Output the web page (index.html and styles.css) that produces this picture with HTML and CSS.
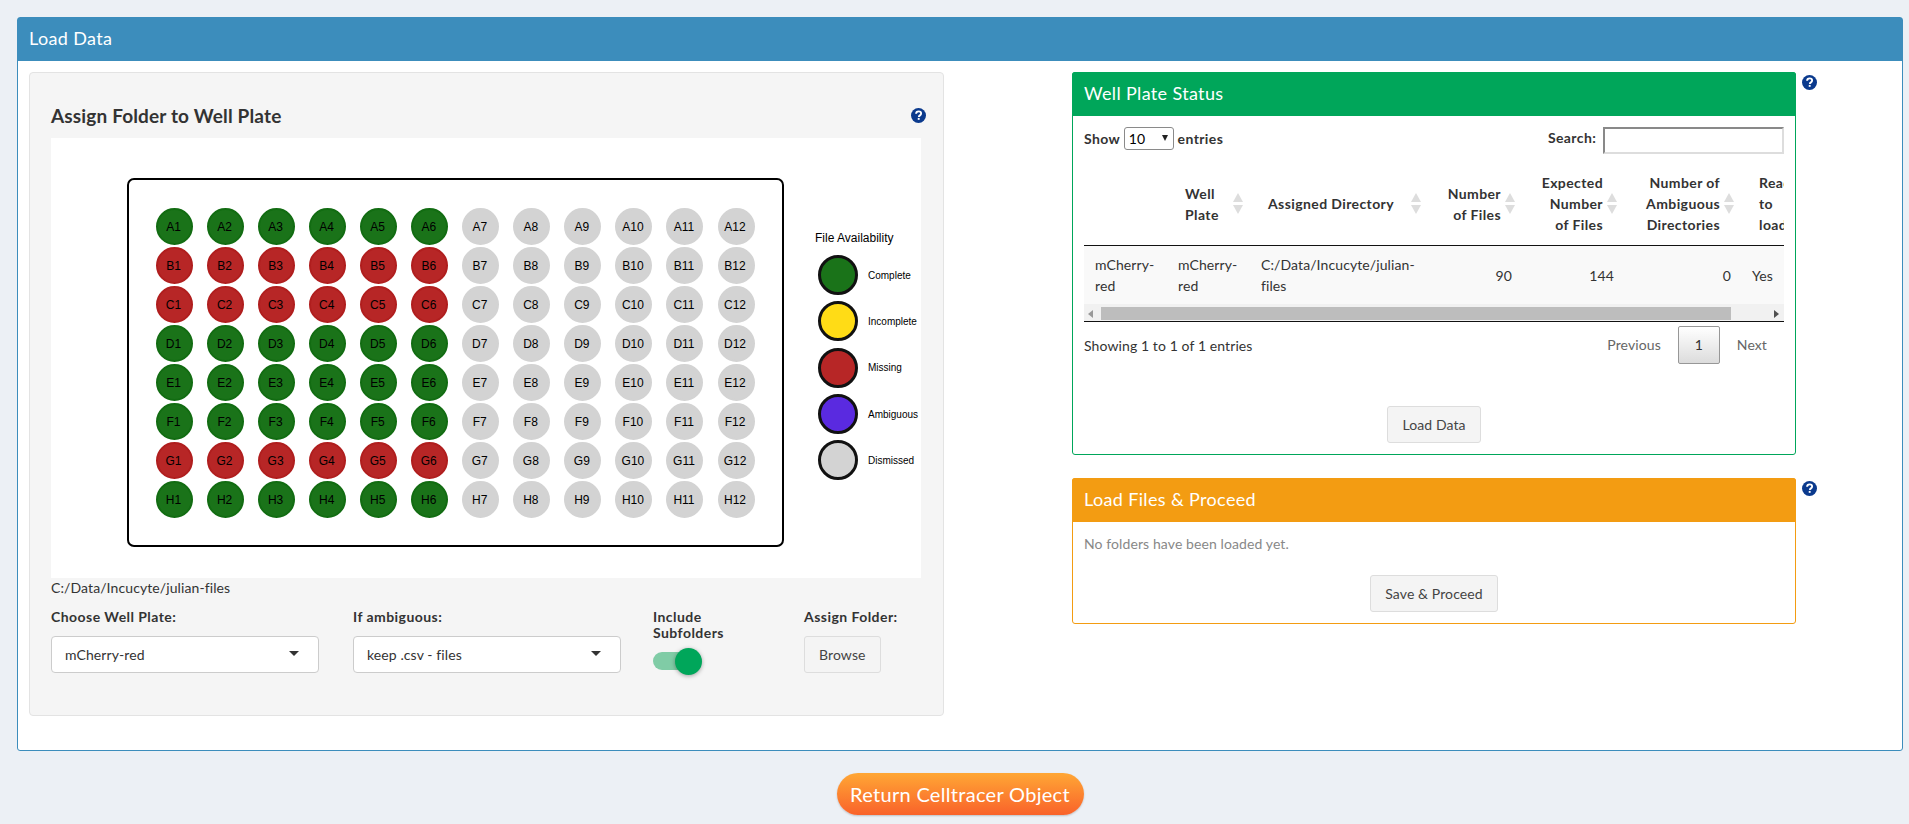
FILE: index.html
```html
<!DOCTYPE html>
<html>
<head>
<meta charset="utf-8">
<title>Load Data</title>
<link rel="stylesheet" href="styles.css">
</head>
<body>
<div class="box box-primary">
  <div class="box-header">Load Data</div>
  <div class="box-body">

    <div class="well">
      <div class="well-title">
        <h4>Assign Folder to Well Plate</h4>
        <svg class="help help-left" viewBox="0 0 16 16"><circle cx="8" cy="8" r="8"/><path d="M5.4 6.2c0-1.6 1.2-2.6 2.8-2.6 1.5 0 2.6 1 2.6 2.3 0 2-2.4 1.9-2.4 3.6" /><rect x="7.2" y="10.6" width="2" height="2"/></svg>
      </div>
      <div class="plot">
        <div class="plate">
          <span class="dot ok">A1</span><span class="dot ok">A2</span><span class="dot ok">A3</span><span class="dot ok">A4</span><span class="dot ok">A5</span><span class="dot ok">A6</span><span class="dot off">A7</span><span class="dot off">A8</span><span class="dot off">A9</span><span class="dot off">A10</span><span class="dot off">A11</span><span class="dot off">A12</span>
          <span class="dot miss">B1</span><span class="dot miss">B2</span><span class="dot miss">B3</span><span class="dot miss">B4</span><span class="dot miss">B5</span><span class="dot miss">B6</span><span class="dot off">B7</span><span class="dot off">B8</span><span class="dot off">B9</span><span class="dot off">B10</span><span class="dot off">B11</span><span class="dot off">B12</span>
          <span class="dot miss">C1</span><span class="dot miss">C2</span><span class="dot miss">C3</span><span class="dot miss">C4</span><span class="dot miss">C5</span><span class="dot miss">C6</span><span class="dot off">C7</span><span class="dot off">C8</span><span class="dot off">C9</span><span class="dot off">C10</span><span class="dot off">C11</span><span class="dot off">C12</span>
          <span class="dot ok">D1</span><span class="dot ok">D2</span><span class="dot ok">D3</span><span class="dot ok">D4</span><span class="dot ok">D5</span><span class="dot ok">D6</span><span class="dot off">D7</span><span class="dot off">D8</span><span class="dot off">D9</span><span class="dot off">D10</span><span class="dot off">D11</span><span class="dot off">D12</span>
          <span class="dot ok">E1</span><span class="dot ok">E2</span><span class="dot ok">E3</span><span class="dot ok">E4</span><span class="dot ok">E5</span><span class="dot ok">E6</span><span class="dot off">E7</span><span class="dot off">E8</span><span class="dot off">E9</span><span class="dot off">E10</span><span class="dot off">E11</span><span class="dot off">E12</span>
          <span class="dot ok">F1</span><span class="dot ok">F2</span><span class="dot ok">F3</span><span class="dot ok">F4</span><span class="dot ok">F5</span><span class="dot ok">F6</span><span class="dot off">F7</span><span class="dot off">F8</span><span class="dot off">F9</span><span class="dot off">F10</span><span class="dot off">F11</span><span class="dot off">F12</span>
          <span class="dot miss">G1</span><span class="dot miss">G2</span><span class="dot miss">G3</span><span class="dot miss">G4</span><span class="dot miss">G5</span><span class="dot miss">G6</span><span class="dot off">G7</span><span class="dot off">G8</span><span class="dot off">G9</span><span class="dot off">G10</span><span class="dot off">G11</span><span class="dot off">G12</span>
          <span class="dot ok">H1</span><span class="dot ok">H2</span><span class="dot ok">H3</span><span class="dot ok">H4</span><span class="dot ok">H5</span><span class="dot ok">H6</span><span class="dot off">H7</span><span class="dot off">H8</span><span class="dot off">H9</span><span class="dot off">H10</span><span class="dot off">H11</span><span class="dot off">H12</span>
        </div>
        <div class="legend">
          <div class="legend-title">File Availability</div>
          <div class="legend-item"><i class="key ok"></i>Complete</div>
          <div class="legend-item"><i class="key part"></i>Incomplete</div>
          <div class="legend-item"><i class="key miss"></i>Missing</div>
          <div class="legend-item"><i class="key amb"></i>Ambiguous</div>
          <div class="legend-item"><i class="key off"></i>Dismissed</div>
        </div>
      </div>
      <div class="path">C:/Data/Incucyte/julian-files</div>
      <div class="controls">
        <div>
          <label>Choose Well Plate:</label>
          <div class="selectize">mCherry-red</div>
        </div>
        <div>
          <label>If ambiguous:</label>
          <div class="selectize">keep .csv - files</div>
        </div>
        <div>
          <label>Include<br>Subfolders</label>
          <div class="switch"><span class="knob"></span></div>
        </div>
        <div>
          <label>Assign Folder:</label>
          <button class="btn">Browse</button>
        </div>
      </div>
    </div>

    <div class="side">
      <div class="side-row">
        <div class="card card-green">
          <div class="card-header">Well Plate Status</div>
          <div class="card-body">
            <div class="dt-top">
              <div class="dt-length">Show <span class="dt-select"><select><option>10</option><option>25</option></select></span> entries</div>
              <div class="dt-filter">Search: <input type="text"></div>
            </div>
            <div class="dt-scroll">
              <table>
                <colgroup>
                  <col class="c1"><col class="c2"><col class="c3"><col class="c4"><col class="c5"><col class="c6"><col class="c7">
                </colgroup>
                <thead>
                  <tr>
                    <th class="plain"></th>
                    <th>Well<br>Plate</th>
                    <th>Assigned Directory</th>
                    <th class="num">Number<br>of Files</th>
                    <th class="num">Expected<br>Number<br>of Files</th>
                    <th class="num">Number of<br>Ambiguous<br>Directories</th>
                    <th>Ready<br>to<br>load</th>
                  </tr>
                </thead>
                <tbody>
                  <tr>
                    <td>mCherry-<br>red</td>
                    <td>mCherry-<br>red</td>
                    <td>C:/Data/Incucyte/julian-<br>files</td>
                    <td class="num">90</td>
                    <td class="num">144</td>
                    <td class="num">0</td>
                    <td>Yes</td>
                  </tr>
                </tbody>
              </table>
              <div class="dt-bar">
                <span class="arrow-left"></span>
                <span class="thumb"></span>
                <span class="arrow-right"></span>
              </div>
            </div>
            <div class="dt-bottom">
              <div>Showing 1 to 1 of 1 entries</div>
              <div class="paging">
                <a>Previous</a>
                <a class="current">1</a>
                <a>Next</a>
              </div>
            </div>
            <div class="card-action load-action"><button class="btn">Load Data</button></div>
          </div>
        </div>
        <svg class="help" viewBox="0 0 16 16"><circle cx="8" cy="8" r="8"/><path d="M5.4 6.2c0-1.6 1.2-2.6 2.8-2.6 1.5 0 2.6 1 2.6 2.3 0 2-2.4 1.9-2.4 3.6" /><rect x="7.2" y="10.6" width="2" height="2"/></svg>
      </div>

      <div class="side-row">
        <div class="card card-orange">
          <div class="card-header">Load Files &amp; Proceed</div>
          <div class="card-body">
            <div class="muted">No folders have been loaded yet.</div>
            <div class="card-action save-action"><button class="btn">Save &amp; Proceed</button></div>
          </div>
        </div>
        <svg class="help" viewBox="0 0 16 16"><circle cx="8" cy="8" r="8"/><path d="M5.4 6.2c0-1.6 1.2-2.6 2.8-2.6 1.5 0 2.6 1 2.6 2.3 0 2-2.4 1.9-2.4 3.6" /><rect x="7.2" y="10.6" width="2" height="2"/></svg>
      </div>
    </div>

  </div>
</div>
<div class="return-row"><button class="btn-return">Return Celltracer Object</button></div>
</body>
</html>
```

FILE: styles.css
```css
* { box-sizing: border-box; }
html, body { height: 100%; }
body {
  margin: 0;
  padding: 17px 6px 0 17px;
  background-color: #ecf0f5;
  font-family: Lato, "Noto Sans", sans-serif;
  font-size: 14px;
  line-height: 21px;
  letter-spacing: .1px;
  color: #333;
  overflow: hidden;
}

/* main box */
.box-primary {
  height: 734px;
  background: #fff;
  border: 1px solid #3c8dbc;
  border-radius: 3px;
}
.box-header {
  height: 43px;
  padding-left: 11px;
  background: #3c8dbc;
  color: #fff;
  font-size: 18px;
  line-height: 41px;
  letter-spacing: .35px;
}
.box-body {
  display: grid;
  grid-template-columns: 915px 1fr;
  column-gap: 128px;
  padding: 11px 0 0 11px;
}

/* left panel */
.well {
  height: 644px;
  padding: 30px 22px 0 21px;
  background: #f5f5f5;
  border: 1px solid #e3e3e3;
  border-radius: 4px;
}
.well-title {
  display: flex;
  justify-content: space-between;
  align-items: center;
  height: 24px;
  margin-bottom: 11px;
}
.well-title h4 {
  margin: 0;
  font-size: 19px;
  font-weight: bold;
  letter-spacing: .15px;
}
.help {
  flex: none;
  width: 15px;
  height: 15px;
  margin: 3px 0 0 6px;
}
.help circle { fill: #0b3a8d; }
.help path { fill: none; stroke: #fff; stroke-width: 2; }
.help rect { fill: #fff; }
.help-left { margin: 0 -5px 0 0; }

/* plate plot */
.plot {
  display: flex;
  height: 440px;
  padding: 40px 0 0 76px;
  background: #fff;
  overflow: hidden;
  font-family: "Liberation Sans", Arial, sans-serif;
  letter-spacing: 0;
  color: #000;
}
.plate {
  flex: none;
  display: grid;
  grid-template-columns: repeat(12, 37px);
  grid-auto-rows: 37px;
  column-gap: 14.05px;
  row-gap: 2px;
  align-content: start;
  width: 657px;
  height: 369px;
  padding: 28px 0 0 27px;
  border: 2px solid #000;
  border-radius: 7px;
}
.dot {
  display: flex;
  align-items: center;
  justify-content: center;
  border-radius: 50%;
  border: 2px solid;
  font-size: 12px;
  line-height: 1;
  padding: 1px 2px 0 0;
}
.dot.ok { background: #1a7319; border-color: #126c12; }
.dot.miss { background: #b72626; border-color: #b01e1e; }
.dot.off { background: #d3d3d3; border-color: #d3d3d3; }

.legend {
  flex: none;
  padding: 52px 0 0 31px;
}
.legend-title {
  font-size: 12px;
  line-height: 16px;
  margin-bottom: 6px;
  white-space: nowrap;
}
.legend-item {
  display: flex;
  align-items: center;
  height: 46.3px;
  padding-left: 3px;
  font-size: 10px;
  white-space: nowrap;
}
.key {
  width: 40px;
  height: 40px;
  margin-right: 10px;
  border: 3px solid #111;
  border-radius: 50%;
}
.key.ok { background: #1a7319; }
.key.part { background: #ffdc16; }
.key.miss { background: #b72626; }
.key.amb { background: #5a2ae0; }
.key.off { background: #d3d3d3; }

.path {
  height: 21px;
  margin-top: -1px;
}

/* inputs under the plot */
.controls {
  display: grid;
  grid-template-columns: 302px 300px 151px 1fr;
  margin-top: 11px;
}
.controls label {
  display: block;
  min-height: 27px;
  font-weight: bold;
  line-height: 16px;
  letter-spacing: .45px;
}
.selectize {
  position: relative;
  width: 268px;
  height: 37px;
  padding: 0 13px;
  background: #fff;
  border: 1px solid #ccc;
  border-radius: 4px;
  line-height: 35px;
}
.selectize::after {
  content: "";
  position: absolute;
  right: 19px;
  top: 14px;
  border: 5px solid transparent;
  border-top-color: #333;
  border-bottom-width: 0;
}
.switch {
  position: relative;
  width: 40px;
  height: 18px;
  margin-top: 11px;
  background: #80cca6;
  border-radius: 9px;
}
.knob {
  position: absolute;
  right: -9px;
  top: -4px;
  width: 27px;
  height: 27px;
  background: #00a65a;
  border-radius: 50%;
  box-shadow: 0 1px 4px rgba(0, 0, 0, .35);
}
.btn {
  padding: 7px 14px;
  background: #f4f4f4;
  border: 1px solid #ddd;
  border-radius: 3px;
  color: #444;
  font: inherit;
  letter-spacing: inherit;
}

/* right side */
.side-row {
  display: flex;
  align-items: flex-start;
  margin-bottom: 23px;
}
.card {
  width: 724px;
  background: #fff;
  border: 1px solid;
  border-radius: 3px;
}
.card-green { border-color: #00a65a; }
.card-orange { border-color: #f39c12; }
.card-header {
  height: 44px;
  margin: -1px -1px 0;
  padding-left: 12px;
  color: #fff;
  font-size: 18px;
  line-height: 42px;
  letter-spacing: .35px;
  border-radius: 3px 3px 0 0;
}
.card-green .card-header { background: #00a65a; }
.card-orange .card-header { background: #f39c12; }
.card-body { padding: 11px; }
.card-action { text-align: center; }
.load-action { margin-top: 42px; }
.save-action { margin-top: 21px; }
.muted { color: #888; }

/* status table */
.dt-top {
  display: flex;
  justify-content: space-between;
  align-items: flex-start;
  height: 27px;
  font-weight: bold;
  letter-spacing: .4px;
}
.dt-select {
  position: relative;
  display: inline-block;
}
.dt-select::after {
  content: "";
  position: absolute;
  right: 6px;
  top: 8px;
  border: 3.5px solid transparent;
  border-top: 6px solid #222;
  border-bottom-width: 0;
}
.dt-length select {
  appearance: none;
  width: 50px;
  height: 23px;
  font: 14px Lato, sans-serif;
  padding: 0 4px;
  background: #fff;
  border: 1px solid #8a8a8a;
  border-radius: 3px;
}
.dt-filter input {
  width: 181px;
  height: 27px;
  margin-left: 3px;
  border: 2px inset #ddd;
  vertical-align: top;
}
.dt-scroll {
  margin-top: 8px;
  width: 700px;
  overflow: hidden;
  border-bottom: 1px solid #111;
}
table {
  table-layout: fixed;
  width: 737px;
  border-collapse: collapse;
}
.c1, .c2 { width: 83px; }
.c3 { width: 178px; }
.c4 { width: 94px; }
.c5 { width: 102px; }
.c6 { width: 117px; }
.c7 { width: 80px; }
th {
  position: relative;
  padding: 10px 21px 10px 18px;
  border-bottom: 1px solid #111;
  font-weight: bold;
  letter-spacing: .4px;
  text-align: left;
  vertical-align: middle;
}
th::before, th::after {
  content: "";
  position: absolute;
  right: 7px;
  border: 5px solid transparent;
}
th::before {
  top: calc(50% - 11px);
  border-top-width: 0;
  border-bottom: 9px solid #ddd;
}
th::after {
  top: calc(50% + 1px);
  border-bottom-width: 0;
  border-top: 9px solid #ddd;
}
th.plain::before, th.plain::after { display: none; }
th.num { text-align: right; }
td {
  height: 58px;
  padding: 8px 10px 8px 11px;
  background: #f9f9f9;
  vertical-align: middle;
}
td.num { text-align: right; }
.dt-bar {
  display: flex;
  align-items: center;
  height: 17px;
  padding-top: 2px;
  background: #f1f1f1;
}
.thumb {
  width: 630px;
  height: 13px;
  margin-left: 3px;
  background: #bdbdbd;
}
.arrow-left, .arrow-right {
  border: 4px solid transparent;
}
.arrow-left {
  margin-left: 4px;
  border-left-width: 0;
  border-right: 5px solid #999;
  margin-right: 5px;
}
.arrow-right {
  margin-left: 43px;
  border-right-width: 0;
  border-left: 5px solid #505050;
}
.dt-bottom {
  display: flex;
  justify-content: space-between;
  align-items: center;
  margin-top: 4px;
}
.paging {
  display: flex;
  align-items: center;
  color: #666;
}
.paging a { padding: 8px 17px; line-height: 20px; }
.paging .current {
  width: 42px;
  height: 38px;
  padding: 8px 0;
  text-align: center;
  color: #333;
  background: linear-gradient(#fff, #dcdcdc);
  border: 1px solid #979797;
  border-radius: 2px;
}

/* bottom button */
.return-row {
  display: flex;
  justify-content: center;
  margin-top: 22px;
}
.btn-return {
  width: 247px;
  height: 42px;
  padding: 0;
  background: linear-gradient(#ffa735, #f9622a);
  border: 0;
  border-radius: 21px;
  box-shadow: 0 1px 2px rgba(0, 0, 0, .2);
  color: #fff;
  font: 20px Lato, sans-serif;
  letter-spacing: .3px;
}
```
